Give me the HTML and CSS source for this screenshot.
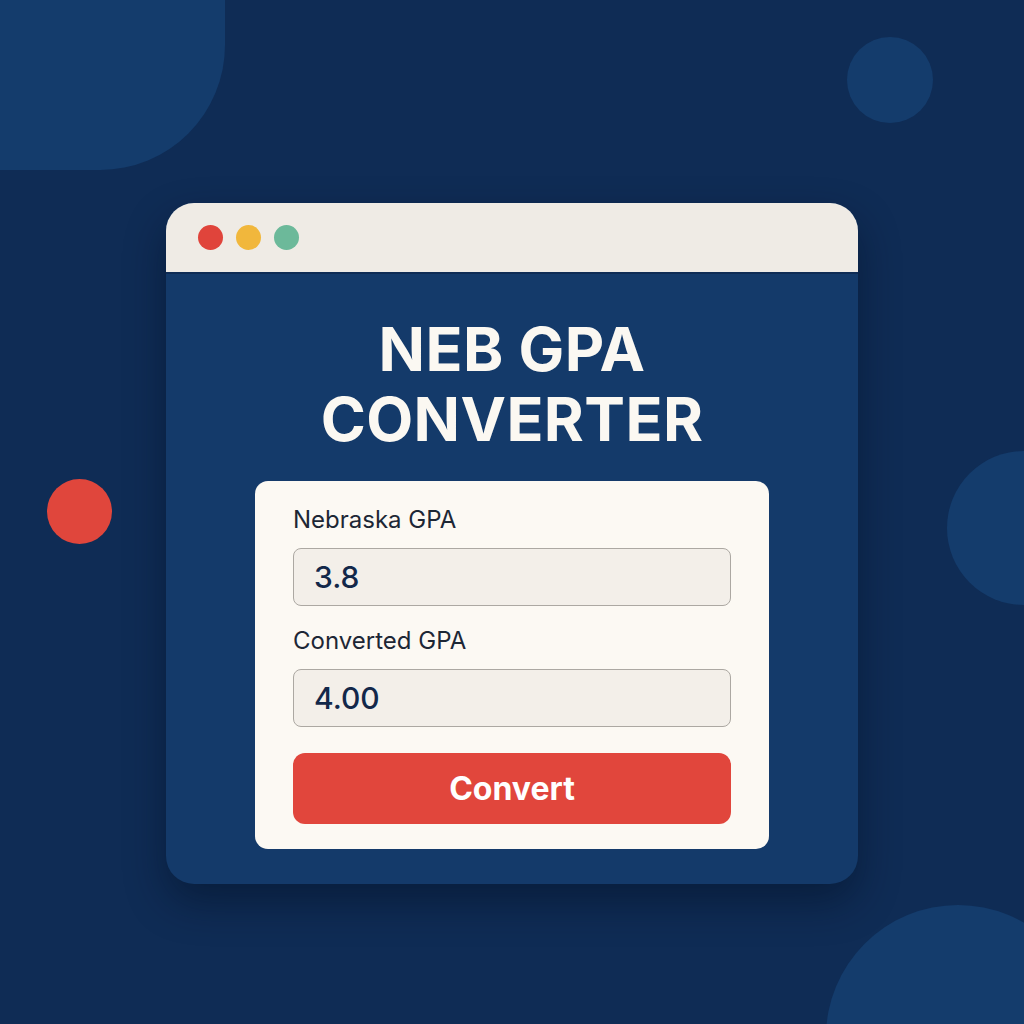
FILE: index.html
```html
<!DOCTYPE html>
<html lang="en">
<head>
    <meta charset="UTF-8">
    <meta name="viewport" content="width=device-width, initial-scale=1.0">
    <title>NEB GPA Converter</title>
    <link rel="stylesheet" href="styles.css">
</head>
<body>
    <div class="blob blob-tl"></div>
    <div class="blob blob-tr"></div>
    <div class="blob blob-red"></div>
    <div class="blob blob-right"></div>
    <div class="blob blob-br"></div>

    <div class="window">
        <div class="titlebar">
            <span class="dot red"></span>
            <span class="dot yellow"></span>
            <span class="dot green"></span>
        </div>

        <div class="content">
            <h1>NEB GPA<br>CONVERTER</h1>

            <form class="card" id="gpaform">
                <label for="nebgpa">Nebraska GPA</label>
                <input type="text" id="nebgpa" class="field" value="3.8">

                <label for="convgpa">Converted GPA</label>
                <input type="text" id="convgpa" class="field" value="4.00" readonly>

                <button type="submit" class="btn">Convert</button>
            </form>
        </div>
    </div>
</body>
</html>
```

FILE: styles.css
```css
*{
    box-sizing: border-box;
}

body{
    margin: 0;
    height: 100vh;
    overflow: hidden;
    position: relative;

    display: flex;
    justify-content: center;
    align-items: flex-start;

    font-family: Inter, "Noto Sans", sans-serif;
    background-color: #0f2c55;
}

/* background shapes */
.blob{
    position: absolute;
    background-color: #143c6c;
    border-radius: 50%;
}
.blob-tl{
    left: -120px;
    top: -120px;
    width: 345px;
    height: 290px;
    border-radius: 0 0 125px 0;
}
.blob-tr{
    left: 847px;
    top: 37px;
    width: 86px;
    height: 86px;
}
.blob-red{
    left: 47px;
    top: 479px;
    width: 65px;
    height: 65px;
    background-color: #e0463c;
}
.blob-right{
    left: 947px;
    top: 451px;
    width: 154px;
    height: 154px;
}
.blob-br{
    left: 826px;
    top: 905px;
    width: 264px;
    height: 264px;
}

.window{
    position: relative;
    margin-top: 203px;
    width: 692px;
    height: 681px;
    background-color: #143a6a;
    border-radius: 28px;
    overflow: hidden;
    box-shadow: 0 18px 40px rgba(3, 14, 32, 0.45);
}

.titlebar{
    height: 71px;
    background-color: #efebe5;
    border-bottom: 2px solid #0f2c55;

    display: flex;
    align-items: center;
    gap: 13px;
    padding-left: 32px;
}

.dot{
    width: 25px;
    height: 25px;
    border-radius: 50%;
}
.red{ background-color: #e0443b; }
.yellow{ background-color: #f1b73c; }
.green{ background-color: #6cb99a; }

.content{
    display: flex;
    flex-direction: column;
    align-items: center;
}

h1{
    margin: 40px 0 27px;
    color: #fbf8f2;
    font-size: 61px;
    font-weight: 700;
    line-height: 70px;
    text-align: center;
    letter-spacing: 0.4px;
}

.card{
    width: 514px;
    background-color: #fcf9f3;
    border-radius: 13px;
    padding: 26px 38px 25px;

    display: flex;
    flex-direction: column;
}

label{
    font-size: 24px;
    color: #1d2735;
    line-height: 26px;
    margin-bottom: 15px;
}

.field{
    height: 58px;
    width: 100%;
    background-color: #f3efe9;
    border: 1px solid #aca8a2;
    border-radius: 8px;
    padding: 0 20px;
    margin-bottom: 22px;

    font-family: Inter, "Noto Sans", sans-serif;
    font-size: 30px;
    font-weight: 500;
    color: #13284a;
    outline: none;
}

.btn{
    height: 71px;
    margin-top: 4px;
    width: 100%;
    border: none;
    border-radius: 12px;
    background-color: #e1463c;

    font-family: Inter, "Noto Sans", sans-serif;
    font-size: 32px;
    font-weight: 700;
    color: #ffffff;
}
```
